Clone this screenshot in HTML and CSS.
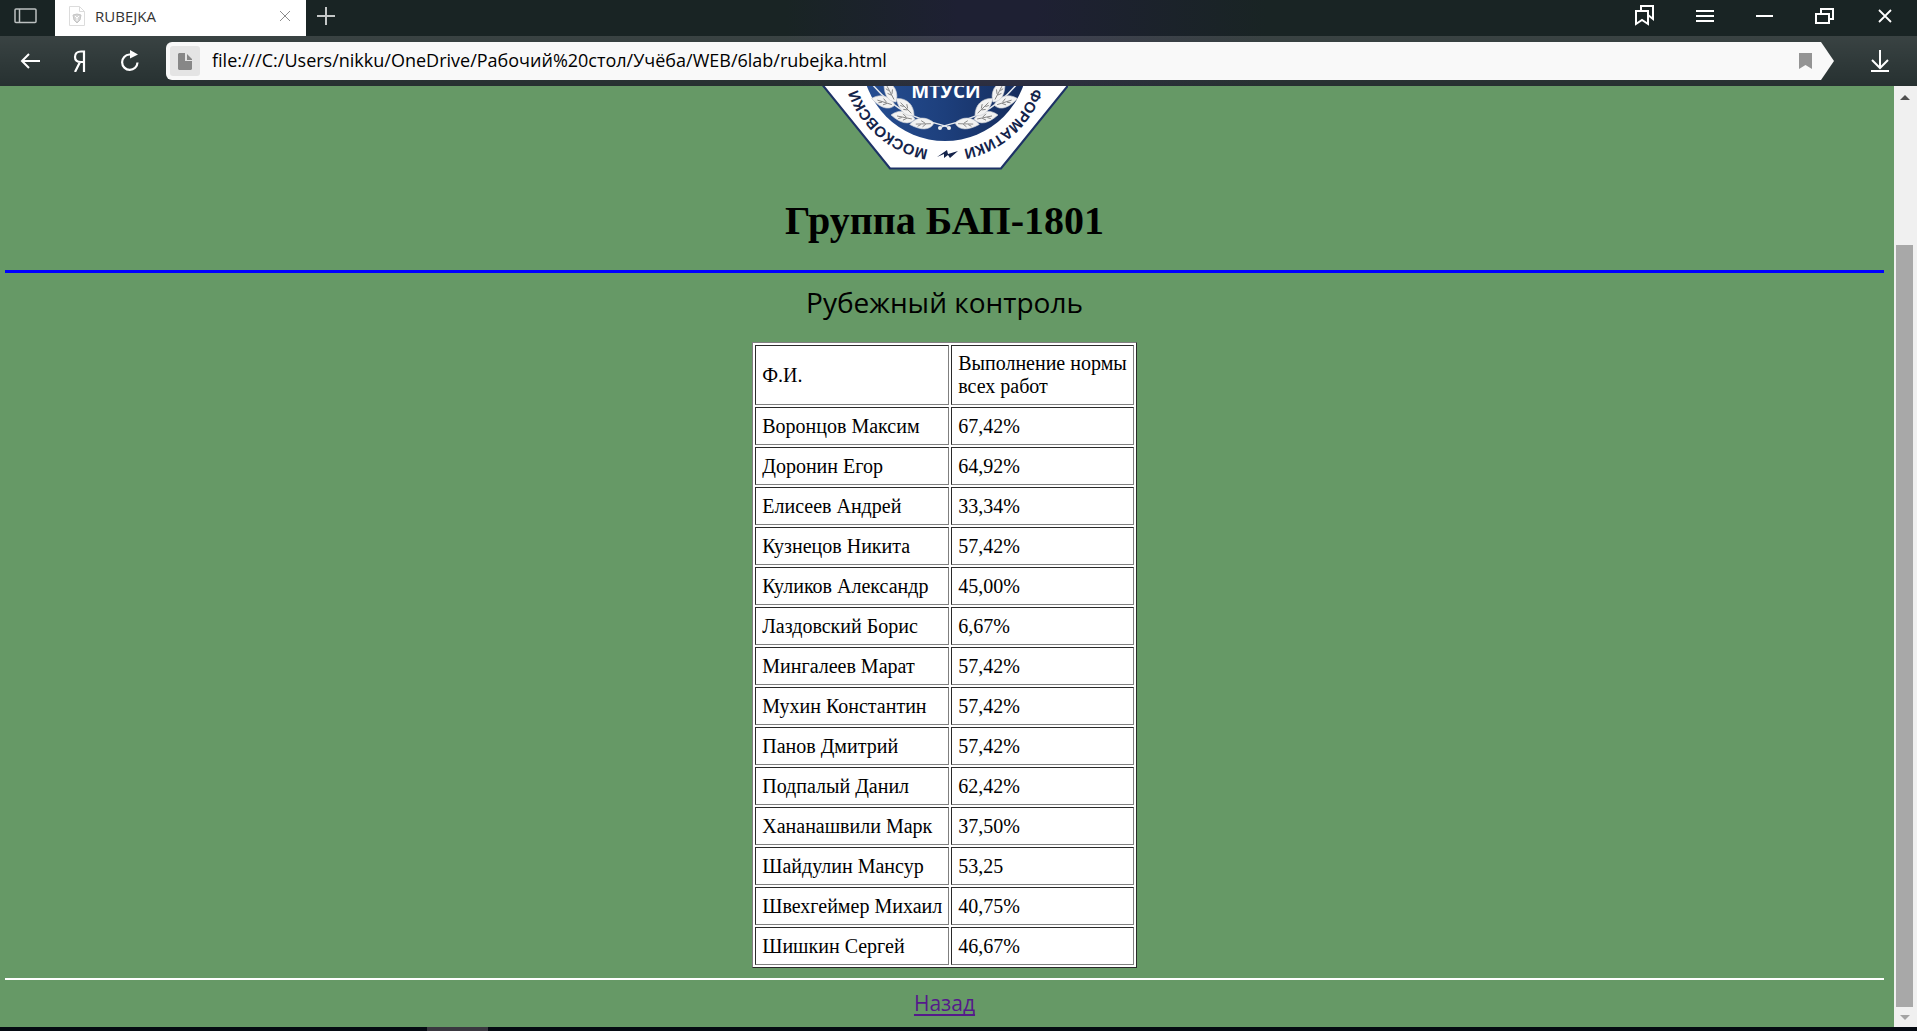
FILE: index.html
```html
<!DOCTYPE html>
<html lang="ru">
<head>
<meta charset="utf-8">
<title>RUBEJKA</title>
<link rel="stylesheet" href="styles.css">
</head>
<body>
<header class="chrome">
  <div class="tabs">
    <button class="icon-btn panel-btn" aria-label="Боковая панель">
      <svg width="24" height="16" viewBox="0 0 24 16" fill="none" stroke="#bcc0c0" stroke-width="1.5"><rect x="1" y="1" width="21" height="13.500" rx="1"/><path d="M5.500 1v13.500"/></svg>
    </button>
    <div class="tab">
      <svg width="16" height="20" viewBox="0 0 16 20" fill="none" stroke="#dcdcdc"><path d="M.5.500h10l5 5v14H.5zM10.500.500v5h5"/><path d="M4 9l4-1 4 1-1 5-3 3-3-3z" fill="#d6d6d6" stroke="#c4c4c4"/><path d="M6 10l2 2 2-2M8 12v3" stroke="#fff"/></svg>
      <span class="tab-title">RUBEJKA</span>
      <button class="icon-btn" aria-label="Закрыть вкладку"><svg width="12" height="12" viewBox="0 0 12 12" stroke="#8c8c8c"><path d="M1 1l10 10M11 1L1 11"/></svg></button>
    </div>
    <button class="icon-btn new-tab" aria-label="Новая вкладка"><svg width="18" height="18" viewBox="0 0 18 18" stroke="#c4c7c7" stroke-width="2"><path d="M9 0v18M0 9h18"/></svg></button>
    <div class="window-buttons">
      <button class="icon-btn" aria-label="Закладки"><svg width="20" height="22" viewBox="0 0 20 22" fill="none" stroke="#fff" stroke-width="2"><path d="M1 6h12v13l-6-4-6 4z"/><path d="M6 6V1h12v13l-5-4"/></svg></button>
      <button class="icon-btn" aria-label="Меню"><svg width="18" height="14" viewBox="0 0 18 14" stroke="#fff" stroke-width="2"><path d="M0 2h18M0 7h18M0 12h18"/></svg></button>
      <button class="icon-btn" aria-label="Свернуть"><svg width="18" height="14" viewBox="0 0 18 14" stroke="#fff" stroke-width="2"><path d="M0 7h17"/></svg></button>
      <button class="icon-btn" aria-label="Восстановить"><svg width="20" height="16" viewBox="0 0 20 16" fill="none" stroke="#fff" stroke-width="2"><path d="M1 6h13v9H1z"/><path d="M6 6V1h12v10h-4"/></svg></button>
      <button class="icon-btn" aria-label="Закрыть"><svg width="14" height="14" viewBox="0 0 14 14" stroke="#fff" stroke-width="1.800"><path d="M1 1l12 12M13 1L1 13"/></svg></button>
    </div>
  </div>
  <div class="toolbar">
    <button class="icon-btn nav-btn" aria-label="Назад по истории"><svg width="20" height="16" viewBox="0 0 20 16" fill="none" stroke="#fff" stroke-width="2"><path d="M20 8H2M9 1L2 8l7 7"/></svg></button>
    <button class="icon-btn nav-btn" aria-label="Яндекс"><svg width="14" height="22" viewBox="0 0 14 22" fill="none" stroke="#fff" stroke-width="2.200"><path d="M11 22V1.500H8C4 1.500 2 4 2 7s2 5 6 5h3M7 12L2 22"/></svg></button>
    <button class="icon-btn nav-btn" aria-label="Обновить"><svg width="20" height="22" viewBox="0 0 20 22" fill="none" stroke="#fff" stroke-width="2.200"><path d="M12 4.500H9.500a7.700 7.700 0 1 0 8 8"/><path d="M10 0l8 4.500-8 4z" fill="#fff" stroke="none"/></svg></button>
    <div class="address">
      <button class="icon-btn site-btn" aria-label="Сведения о файле"><svg width="14" height="17" viewBox="0 0 14 17" fill="#878787"><path d="M1 0h6v8h7v8l-1 1H1l-1-1V1zM9 1l5 5v1H9z"/></svg></button>
      <input class="url" type="text" aria-label="Адрес" value="file:///C:/Users/nikku/OneDrive/Рабочий%20стол/Учёба/WEB/6lab/rubejka.html">
      <button class="icon-btn" aria-label="Добавить в закладки"><svg width="13" height="16" viewBox="0 0 13 16" fill="#949494"><path d="M0 0h13v16l-6.500-4L0 16z"/></svg></button>
    </div>
    <button class="icon-btn download-btn" aria-label="Загрузки"><svg width="18" height="22" viewBox="0 0 18 22" fill="none" stroke="#fff" stroke-width="2"><path d="M9 0v17M1 10l8 8 8-8M0 21h18"/></svg></button>
  </div>
</header>
<div class="viewport">
  <main class="page">
    <svg class="logo" width="246" height="84" viewBox="822 86 246 84" role="img" aria-label="МТУСИ">
      <defs>
        <linearGradient id="blue"><stop offset="0" stop-color="#264f94"/><stop offset=".5" stop-color="#1d3f7c"/><stop offset="1" stop-color="#142a5a"/></linearGradient>
        <path id="ring-left" d="M945 151A93 93 0 0 1 945 -35"/>
        <path id="ring-right" d="M945 -35A93 93 0 0 1 945 151"/>
        <g id="leaf"><path d="M0 0C3-8 12-9 24-4 18 5 8 6 0 0z" fill="#f2f2f2" stroke="#c9ccd2" stroke-width=".6"/><path d="M3-1L18-3M8-2l3-3M9-1l4 2M13-3l3-2" fill="none" stroke="#777" stroke-width=".8"/></g>
        <g id="branch"><path d="M949 128C943 122 905 124 872 84" fill="none" stroke="#e5e8ec" stroke-width="1.500"/>
          <use href="#leaf" transform="translate(934 123) rotate(186)"/>
          <use href="#leaf" transform="translate(915 119) rotate(199)"/>
          <use href="#leaf" transform="translate(914 115) rotate(232)"/>
          <use href="#leaf" transform="translate(895 105) rotate(205)"/>
          <use href="#leaf" transform="translate(896 102) rotate(250)"/>
        </g>
      </defs>
      <path d="M812 72L890 168.500h111L1079 72z" fill="#fff" stroke="#1d3266" stroke-width="2.200"/>
      <circle cx="945" cy="58" r="83" fill="url(#blue)"/>
      <use href="#branch"/>
      <use href="#branch" transform="matrix(-1 0 0 1 1889 0)"/>
      <circle cx="940" cy="128" r="2" fill="#eee"/><circle cx="949" cy="128" r="2" fill="#eee"/>
      <text class="logo-name" x="946" y="98" text-anchor="middle">МТУСИ</text>
      <text class="logo-ring"><textPath href="#ring-left" startOffset="17">МОСКОВСКИ</textPath></text>
      <text class="logo-ring" text-anchor="end"><textPath href="#ring-right" startOffset="273">ФОРМАТИКИ</textPath></text>
      <path d="M937 157l10-7 1 4 10-3-8 7-2-3-4 3v-4z" fill="#14234a"/>
    </svg>
    <h1 class="group">Группа БАП-1801</h1>
    <hr class="rule rule-blue">
    <h2 class="subject">Рубежный контроль</h2>
    <table class="results">
      <tr><td>Ф.И.</td><td>Выполнение нормы<br>всех работ</td></tr>
      <tr><td>Воронцов Максим</td><td>67,42%</td></tr>
      <tr><td>Доронин Егор</td><td>64,92%</td></tr>
      <tr><td>Елисеев Андрей</td><td>33,34%</td></tr>
      <tr><td>Кузнецов Никита</td><td>57,42%</td></tr>
      <tr><td>Куликов Александр</td><td>45,00%</td></tr>
      <tr><td>Лаздовский Борис</td><td>6,67%</td></tr>
      <tr><td>Мингалеев Марат</td><td>57,42%</td></tr>
      <tr><td>Мухин Константин</td><td>57,42%</td></tr>
      <tr><td>Панов Дмитрий</td><td>57,42%</td></tr>
      <tr><td>Подпалый Данил</td><td>62,42%</td></tr>
      <tr><td>Хананашвили Марк</td><td>37,50%</td></tr>
      <tr><td>Шайдулин Мансур</td><td>53,25</td></tr>
      <tr><td>Швехгеймер Михаил</td><td>40,75%</td></tr>
      <tr><td>Шишкин Сергей</td><td>46,67%</td></tr>
    </table>
    <hr class="rule rule-white">
    <a class="back" href="#">Назад</a>
  </main>
  <div class="scrollbar">
    <svg width="10" height="5" viewBox="0 0 10 5" fill="#505050"><path d="M0 5l5-5 5 5z"/></svg>
    <div class="track"><div class="thumb"></div></div>
    <svg width="10" height="5" viewBox="0 0 10 5" fill="#a3a3a3"><path d="M0 0l5 5 5-5z"/></svg>
  </div>
</div>
<div class="taskbar"><div class="task"></div></div>
</body>
</html>
```
FILE: styles.css
```css
* { box-sizing: border-box; }

body {
  display: flex;
  flex-direction: column;
  height: 100vh;
  margin: 0;
  overflow: hidden;
  font-family: "Open Sans", "Noto Sans", sans-serif;
}

.icon-btn {
  display: flex;
  align-items: center;
  justify-content: center;
  padding: 0;
  border: 0;
  background: none;
}

.chrome {
  flex: none;
  background: linear-gradient(90deg, #192424 41%, #1e2033 50%, #1e2033 54%, #192424 66%);
}

.tabs {
  display: flex;
  align-items: center;
  height: 36px;
  padding-bottom: 4px;
}

.panel-btn { width: 55px; padding-right: 4px; }

.tab {
  display: flex;
  align-items: center;
  align-self: flex-start;
  gap: 10px;
  width: 251px;
  height: 36px;
  padding: 0 15px 4px 14px;
  background: #fff;
}

.tab-title {
  flex: 1;
  color: #333;
  font-size: 15px;
}

.new-tab { width: 40px; height: 32px; }

.window-buttons {
  display: flex;
  height: 32px;
  margin-left: auto;
  padding-right: 2px;
}

.window-buttons .icon-btn { width: 60px; }

.toolbar {
  display: flex;
  align-items: center;
  height: 50px;
  padding-left: 5px;
  background: linear-gradient(rgba(255, 255, 255, 0.14), rgba(255, 255, 255, 0.06));
}

.nav-btn { width: 50px; height: 38px; }

.address {
  display: flex;
  flex: 1;
  align-items: center;
  height: 38px;
  margin-left: 11px;
  padding: 0 22px 0 4px;
  border-radius: 6px 0 0 6px;
  background: #f9f9f9;
  clip-path: polygon(0 0, calc(100% - 13px) 0, 100% 50%, calc(100% - 13px) 100%, 0 100%);
}

.site-btn {
  width: 30px;
  height: 30px;
  border-radius: 3px;
  background: #e4e4e4;
}

.url {
  flex: 1;
  min-width: 0;
  padding: 0 12px 2px;
  border: 0;
  background: none;
  color: #000;
  font-family: inherit;
  font-size: 18px;
}

.download-btn { width: 83px; padding-left: 9px; }

.viewport {
  display: flex;
  flex: 1;
  min-height: 0;
  background: #669966;
}

.page {
  display: flex;
  flex: 1;
  flex-direction: column;
  align-items: center;
  padding: 0 10px 0 5px;
  overflow: hidden;
}

.logo { flex: none; }

.logo-name {
  fill: #fff;
  font: bold 19px "Open Sans", sans-serif;
}

.logo-ring {
  fill: #14234a;
  font: bold 15px "Liberation Sans", sans-serif;
}

.group {
  margin: 28px 0 26px;
  font: bold 40px/46px "Liberation Serif", serif;
}

.rule {
  flex: none;
  width: 100%;
  margin: 0;
  border: 0;
}

.rule-blue { height: 3px; background: #00f; }

.rule-white { height: 2px; background: #fff; }

.subject {
  margin: 8px 0 19px;
  font-size: 28px;
  font-weight: 400;
  line-height: 42px;
}

.results {
  margin-bottom: 10px;
  border: 1px solid;
  border-color: #808080 #2a2a2a #2a2a2a #808080;
  border-spacing: 2px;
  background: #fff;
  font: 20px/23px "Liberation Serif", serif;
}

.results td {
  height: 38px;
  padding: 6px;
  border: 1px solid;
  border-color: #2a2a2a #808080 #808080 #2a2a2a;
}

.back {
  margin-top: 8px;
  color: #551a8b;
  font-size: 21px;
  line-height: 30px;
  text-underline-offset: 3px;
  text-decoration-skip-ink: none;
}

.scrollbar {
  display: flex;
  flex: none;
  flex-direction: column;
  align-items: center;
  width: 23px;
  padding: 9px 2px 7px 0;
  background: #f0f0f0;
}

.track {
  flex: 1;
  width: 17px;
  margin: 8px 0;
  padding-top: 137px;
}

.thumb { height: 100%; background: #a8a8a8; }

.taskbar {
  flex: none;
  height: 4px;
  padding-left: 427px;
  background: #050a12;
}

.task { width: 61px; height: 4px; background: #3a3840; }
```
